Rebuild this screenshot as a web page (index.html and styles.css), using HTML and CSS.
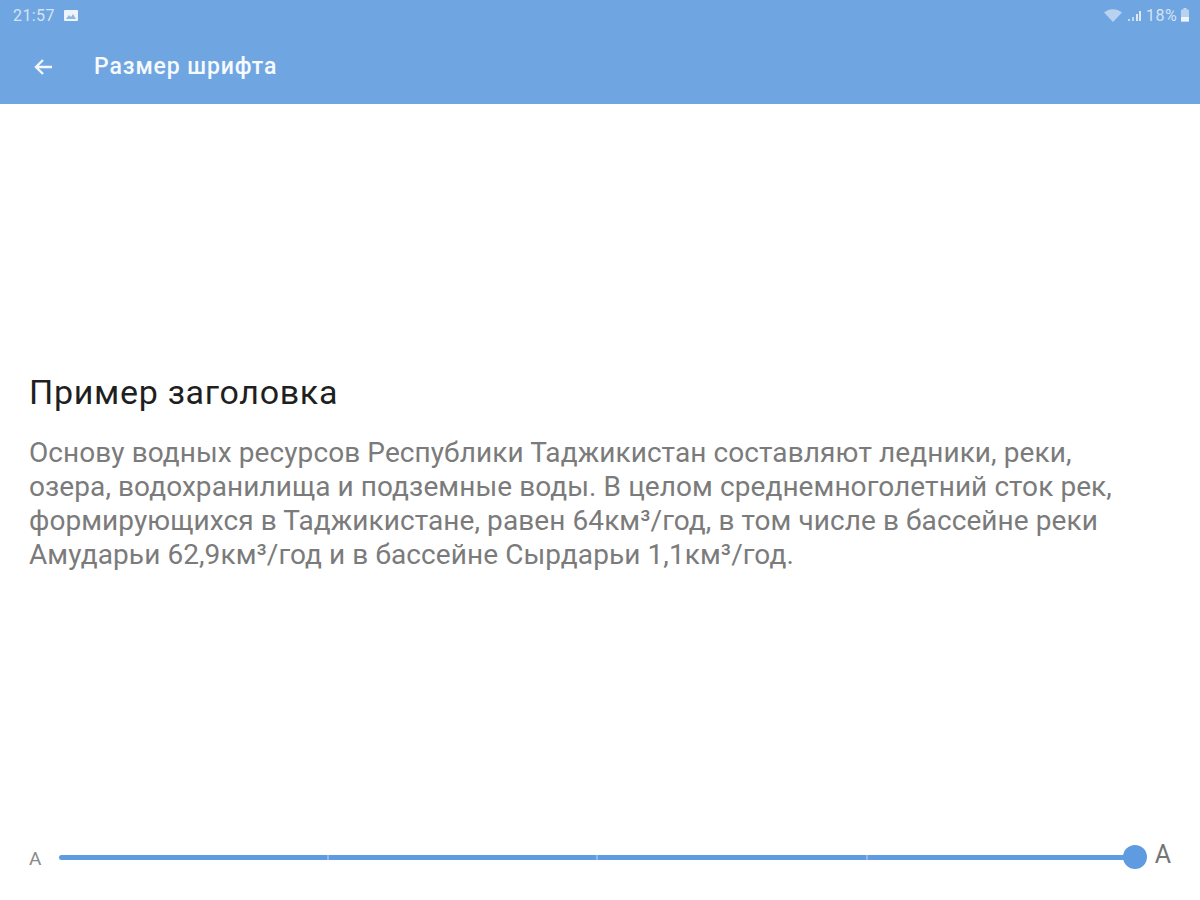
FILE: index.html
```html
<!DOCTYPE html>
<html lang="ru">
<head>
  <meta charset="UTF-8">
  <meta name="viewport" content="width=device-width, initial-scale=1.0">
  <title>Размер шрифта</title>
  <link rel="stylesheet" href="styles.css">
</head>
<body>
  <div class="screen">
    <header class="appbar">
      <div class="statusbar">
        <div class="status-left">
          <span>21:57</span>
          <svg class="status-pic" width="16" height="13" viewBox="0 0 16 13">
            <rect x="1" y="1" width="14" height="11" rx="1" fill="#eef4fb"/>
            <path d="M3 10l3-4 2 2 2-3 3 5z" fill="#8fb8e6"/>
          </svg>
        </div>
        <div class="status-right">
          <svg class="status-wifi" width="19" height="13" viewBox="0 0 19 13">
            <path d="M0 3.5C5-1 13-1 18 3.5L9 13z" fill="#b9d2ef"/>
          </svg>
          <svg class="status-signal" width="14" height="13" viewBox="0 0 14 13">
            <rect x="0" y="10" width="2" height="2" fill="#c4d9f1"/>
            <rect x="4" y="8" width="2" height="4" fill="#c4d9f1"/>
            <rect x="8" y="5" width="2" height="7" fill="#dce9f7"/>
            <rect x="11" y="2" width="2" height="10" fill="#dce9f7"/>
          </svg>
          <span>18%</span>
          <svg width="10" height="14" viewBox="0 0 10 14">
            <rect x="3.5" y="0" width="3" height="2" fill="#c4d9f1"/>
            <rect x="1" y="1.5" width="8" height="12" rx="1" fill="#b9d2ef"/>
            <rect x="1" y="9" width="8" height="4.5" fill="#eef4fb"/>
          </svg>
        </div>
      </div>
      <div class="toolbar">
        <svg class="back" width="20" height="18" viewBox="0 0 20 18">
          <path d="M19 9H3M10 2L3 9l7 7" fill="none" stroke="#f4f8fd" stroke-width="2.4"/>
        </svg>
        <h1 class="toolbar-title">Размер шрифта</h1>
      </div>
    </header>

    <main class="preview">
      <h2 class="preview-title">Пример заголовка</h2>
      <p class="preview-text">Основу водных ресурсов Республики Таджикистан составляют ледники, реки,<br>озера, водохранилища и подземные воды. В целом среднемноголетний сток рек,<br>формирующихся в Таджикистане, равен 64км³/год, в том числе в бассейне реки<br>Амударьи 62,9км³/год и в бассейне Сырдарьи 1,1км³/год.</p>
    </main>

    <div class="size-slider">
      <span class="size-small">A</span>
      <div class="track">
        <span class="tick"></span>
        <span class="tick"></span>
        <span class="tick"></span>
        <div class="thumb"></div>
      </div>
      <span class="size-large">A</span>
    </div>
  </div>
</body>
</html>
```

FILE: styles.css
```css
* {
  box-sizing: border-box;
}
html, body {
  margin: 0;
  padding: 0;
  background-color: #ffffff;
}
body {
  font-family: Roboto, 'Liberation Sans', sans-serif;
}
.screen {
  width: 1200px;
  height: 900px;
  display: flex;
  flex-direction: column;
  overflow: hidden;
}
.appbar {
  height: 104px;
  background-color: #6fa6e2;
  flex-shrink: 0;
}
.statusbar {
  height: 30px;
  padding: 0 10px 0 13px;
  display: flex;
  justify-content: space-between;
  align-items: center;
  font-size: 16px;
  letter-spacing: 0.4px;
  color: #d3e3f5;
}
.status-left {
  display: flex;
  align-items: center;
  gap: 8px;
}
.status-right {
  display: flex;
  align-items: center;
  gap: 3px;
}
.status-wifi {
  margin-right: 2px;
}
.status-signal {
  margin-right: 1px;
}
.toolbar {
  height: 74px;
  padding: 0 0 1px 33px;
  display: flex;
  align-items: center;
  gap: 41px;
}
.back {
  flex-shrink: 0;
}
.toolbar-title {
  margin: 0;
  font-size: 23px;
  font-weight: 500;
  letter-spacing: 0.9px;
  color: #f7fafd;
}
.preview {
  flex: 1;
  padding: 269px 29px 0;
}
.preview-title {
  margin: 0;
  font-size: 34px;
  font-weight: 400;
  line-height: 38px;
  letter-spacing: 0.7px;
  color: #1f1f1f;
}
.preview-text {
  margin: 25px 0 0;
  font-size: 28px;
  line-height: 34px;
  letter-spacing: 0.08px;
  color: #7b7b7b;
}
.size-slider {
  height: 86px;
  flex-shrink: 0;
  padding: 0 29px;
  display: flex;
  align-items: center;
}
.size-small {
  width: 30px;
  font-size: 19px;
  color: #8a8a8a;
  padding-top: 3px;
}
.track {
  flex: 1;
  height: 5px;
  background-color: #5f9be0;
  border-radius: 3px;
  position: relative;
  display: flex;
  justify-content: space-evenly;
}
.tick {
  width: 2px;
  height: 5px;
  background-color: #8fb9ea;
}
.thumb {
  position: absolute;
  right: -12px;
  top: -10px;
  width: 24px;
  height: 24px;
  border-radius: 50%;
  background-color: #5f9be0;
}
.size-large {
  width: 36px;
  text-align: right;
  font-size: 25px;
  color: #757575;
  padding-bottom: 5px;
}
```
